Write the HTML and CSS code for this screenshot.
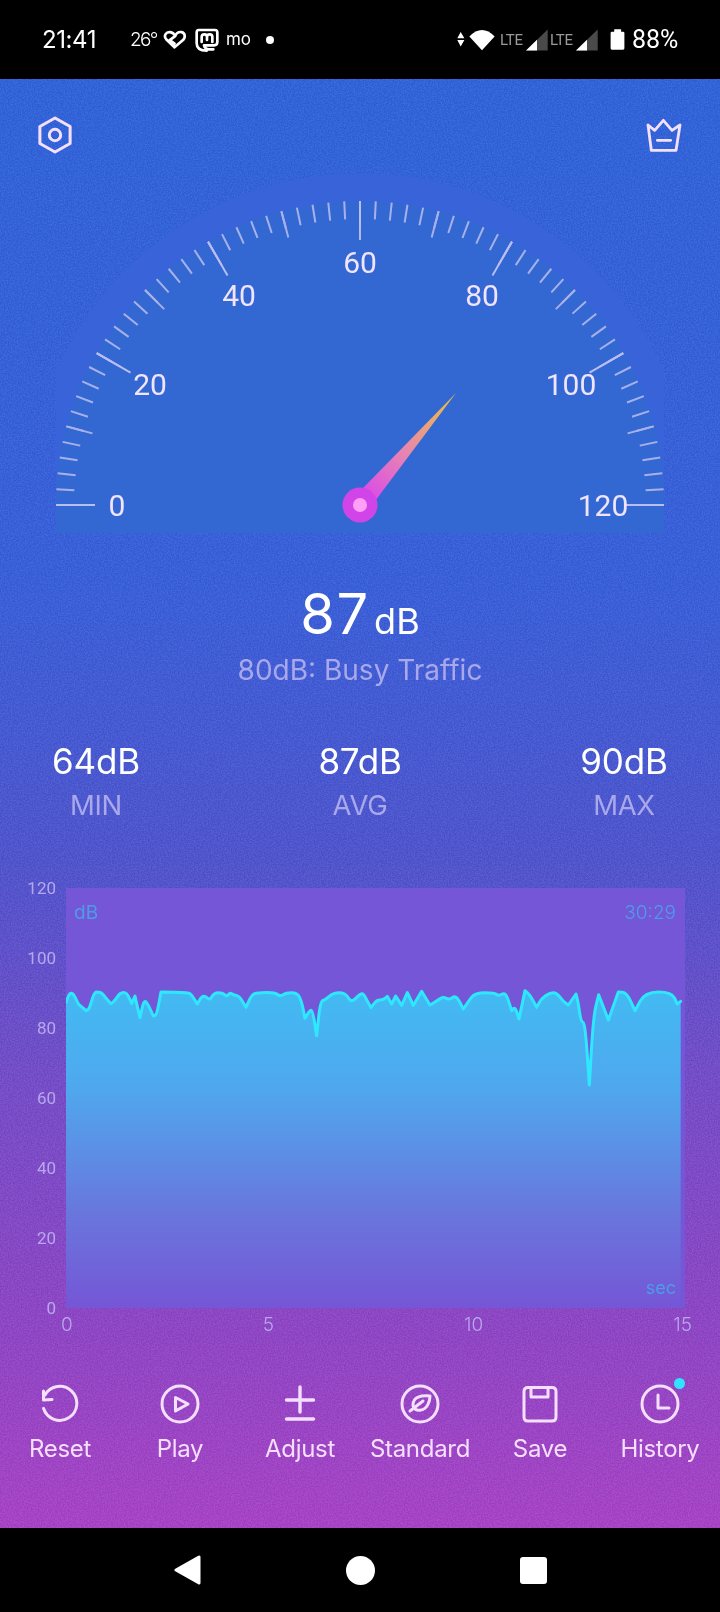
FILE: index.html
```html
<!DOCTYPE html>
<html lang="en">
<head>
<meta charset="utf-8">
<title>Sound Meter</title>
<link rel="stylesheet" href="styles.css">
</head>
<body>
<div class="phone">
  <header class="status">
    <span class="time">21:41</span>
    <span class="temp">26°</span>
    <svg class="si heart" viewBox="488 90 68 56"><path class="st" d="M522 141 L498 118 C488 106 498 95 509 96 C517 97 522 103 524 108 L508 120 L522 130 M524 108 C527 100 535 95 543 96 C553 98 555 111 548 119 L522 141"/></svg>
    <svg class="si masto" viewBox="585 82 72 72"><path class="st" d="M596 88 H645 Q652 88 652 96 V124 Q652 134 642 134 H612 Q614 148 640 146 M596 88 Q590 88 590 96 V128 Q590 150 620 150 M605 124 V109 Q605 101 613 101 Q621 101 621 109 V118 M621 109 Q621 101 629 101 Q637 101 637 109 V124"/></svg>
    <span class="mo">mo</span>
    <span class="dot"></span>
    <span class="spring"></span>
    <svg class="si arrows" viewBox="294 86 26 52"><path class="wf" d="M306 88 L318 108 H295 Z M295 114 H318 L306 135 Z"/></svg>
    <svg class="si wifi" viewBox="330 82 78 68"><path class="wf" d="M330 105 Q369 65 408 105 L369 148 Z"/></svg>
    <span class="lte">LTE</span>
    <svg class="si signal" viewBox="500 86 66 65"><path class="sd" d="M500 150 L565 87 V150 Z"/><path class="wf" d="M500 150 L533 118 V150 Z"/></svg>
    <span class="lte lte2">LTE</span>
    <svg class="si signal sig2" viewBox="500 86 66 65"><path class="sd" d="M500 150 L565 87 V150 Z"/><path class="wf" d="M500 150 L533 118 V150 Z"/></svg>
    <svg class="si battery" viewBox="752 87 44 64"><path class="wf" d="M764 88 H785 V95 H791 Q795 95 795 99 V146 Q795 150 791 150 H757 Q753 150 753 146 V99 Q753 95 757 95 H764 Z"/></svg>
    <span class="pct">88%</span>
  </header>

  <main class="app">
    <svg class="noise" aria-hidden="true"><filter id="grain" color-interpolation-filters="sRGB" x="0" y="0" width="100%" height="100%"><feTurbulence type="fractalNoise" baseFrequency="0.7" numOctaves="2" seed="4"/><feColorMatrix type="matrix" values="2.6 0 0 0 -.8  2.6 0 0 0 -.8  2.6 0 0 0 -.8  0 0 0 0 1"/></filter><rect width="100%" height="100%" filter="url(#grain)"/></svg>

    <div class="top">
      <svg class="hex" viewBox="0 0 36 40"><path class="ic hexs" d="M18 2 L34 11 V29 L18 38 L2 29 V11 Z"/><circle class="ic hexs" cx="18" cy="20" r="6"/></svg>
      <svg class="crown" viewBox="860 355 110 105"><path class="ic3" d="M866 376 L886 392 L912 362 L938 392 L962 376 L950 452 H876 Z M894 422 H934"/></svg>
    </div>

    <svg class="gauge" viewBox="56 173 608 360">
      <defs>
        <clipPath id="upper"><rect x="56" y="100" width="608" height="406"/></clipPath>
        <clipPath id="box"><rect x="56" y="173" width="608" height="360"/></clipPath>
        <linearGradient id="needle" gradientUnits="userSpaceOnUse" x1="360" y1="505" x2="456" y2="393">
          <stop offset="0" stop-color="#d840f0"/>
          <stop offset=".45" stop-color="#e683b4"/>
          <stop offset=".85" stop-color="#ebb25c"/>
          <stop offset="1" stop-color="#e8b84a"/>
        </linearGradient>
      </defs>
      <g clip-path="url(#box)">
        <circle class="halo" cx="360" cy="505" r="332"/>
        <circle class="face" cx="360" cy="505" r="304"/>
        <rect class="face" x="56" y="505" width="608" height="28"/>
      </g>
      <g clip-path="url(#upper)">
        <circle class="tick minor" cx="360" cy="505" r="295" pathLength="360" transform="rotate(180 360 505)"/>
        <circle class="tick mid" cx="360" cy="505" r="290.5" pathLength="360" transform="rotate(180 360 505)"/>
        <circle class="tick major" cx="360" cy="505" r="284.5" pathLength="360" transform="rotate(180 360 505)"/>
      </g>
      <text class="gl" x="117" y="516">0</text>
      <text class="gl" x="150" y="395">20</text>
      <text class="gl" x="239" y="306">40</text>
      <text class="gl" x="360" y="273">60</text>
      <text class="gl" x="482" y="306">80</text>
      <text class="gl" x="571" y="395">100</text>
      <text class="gl" x="603" y="516">120</text>
      <path d="M367.4 511.3 L352.6 498.7 L456 393 Z" fill="url(#needle)"/>
      <circle class="hub" cx="360" cy="505" r="17.5"/>
      <circle class="hub-in" cx="360" cy="505" r="7"/>
    </svg>

    <section class="reading">
      <div class="level"><span class="num">87</span> <span class="unit">dB</span></div>
      <div class="desc">80dB: Busy Traffic</div>
    </section>

    <section class="stats">
      <div class="stat"><div class="sv">64dB</div><div class="sl">MIN</div></div>
      <div class="stat"><div class="sv">87dB</div><div class="sl">AVG</div></div>
      <div class="stat"><div class="sv">90dB</div><div class="sl">MAX</div></div>
    </section>

    <section class="chart">
      <div class="y-axis"><span>120</span><span>100</span><span>80</span><span>60</span><span>40</span><span>20</span><span>0</span></div>
      <div class="plot">
        <svg class="plot-svg" viewBox="198 84 1857 1260" preserveAspectRatio="none">
          <defs>
            <linearGradient id="area" gradientUnits="userSpaceOnUse" x1="0" y1="396" x2="0" y2="1344">
              <stop offset="0" stop-color="#42baf2"/>
              <stop offset=".3" stop-color="#4fa8ee"/>
              <stop offset=".72" stop-color="#6a74dc"/>
              <stop offset="1" stop-color="#7556d6"/>
            </linearGradient>
          </defs>
          <path class="area" d="M198 428 Q205 405 210 401 T220 403.5 T230 421.5 T240 436.5 T251.5 446 T258 452 T263 449.5 T274 426 T284 400.5 T288 396 T296.5 396.5 T311.5 406 T325.5 423 T333 431 T339 426.5 T352.5 410 T370 397.5 T387.5 413.5 T395 430 T400 419 T405 408 T408.5 424 T416 456.5 T420 473 T426 445.5 T438.5 426.5 T452.5 451.5 T460 468 T465 466.5 T476.5 430.5 T483 396 T524 396.5 T570 401 T583.5 418.5 T592 432 T598.5 421 T610 409 T622.5 414.5 T636 409.5 T655 398 T674 404 T685 404 T695 401.5 T709 406.5 T728 425 T738 442 T746.5 423.5 T762.5 401.5 T797.5 397.5 T832.5 403.5 T849 404 T875 398 T898.5 411.5 T910 450 T915 475 T922.5 462.5 T934 451 T944 489.5 T950 527 T954 488.5 T961.5 436 T970 421 T987.5 409 T1017.5 398 T1042.5 410 T1055 422 T1070 412 T1085 401 T1095 410 T1106.5 431.5 T1113 443 T1121.5 431.5 T1140 420 T1156 414.5 T1162 409 T1168.5 420.5 T1175 432 T1181 420 T1187 408 T1196 422 T1205 436 T1213.5 417 T1222 398 T1231 417 T1240 436 T1252.5 415 T1265 394 T1277.5 414.5 T1290 435 T1302.5 427.5 T1322.5 415 T1339 415 T1358 412.5 T1379 426 T1390 447 T1397.5 436 T1415 411.5 T1455 398 T1490 403 T1505 403 T1520 409 T1530 436 T1535 452 T1540 446 T1551 458.5 T1557 477 T1566 434.5 T1575 392 T1582.5 398.5 T1600 423.5 T1610 442 T1617.5 428.5 T1637.5 406.5 T1660 398 T1680 411.5 T1697.5 430 T1705 435 T1716.5 418.5 T1728 402 T1731.5 416 T1739 458.5 T1749 487 T1761.5 581 T1768 675 T1774 572.5 T1788 437 T1796 404 T1810.5 442 T1825 480 T1840 438 T1855 396 T1867.5 397 T1892.5 425 T1905 452 T1920 424 T1975 396 T2023.5 414 T2032 432 T2037 428 L2042 424 V1344 H198 Z"/>
          <path class="line" d="M198 428 Q205 405 210 401 T220 403.5 T230 421.5 T240 436.5 T251.5 446 T258 452 T263 449.5 T274 426 T284 400.5 T288 396 T296.5 396.5 T311.5 406 T325.5 423 T333 431 T339 426.5 T352.5 410 T370 397.5 T387.5 413.5 T395 430 T400 419 T405 408 T408.5 424 T416 456.5 T420 473 T426 445.5 T438.5 426.5 T452.5 451.5 T460 468 T465 466.5 T476.5 430.5 T483 396 T524 396.5 T570 401 T583.5 418.5 T592 432 T598.5 421 T610 409 T622.5 414.5 T636 409.5 T655 398 T674 404 T685 404 T695 401.5 T709 406.5 T728 425 T738 442 T746.5 423.5 T762.5 401.5 T797.5 397.5 T832.5 403.5 T849 404 T875 398 T898.5 411.5 T910 450 T915 475 T922.5 462.5 T934 451 T944 489.5 T950 527 T954 488.5 T961.5 436 T970 421 T987.5 409 T1017.5 398 T1042.5 410 T1055 422 T1070 412 T1085 401 T1095 410 T1106.5 431.5 T1113 443 T1121.5 431.5 T1140 420 T1156 414.5 T1162 409 T1168.5 420.5 T1175 432 T1181 420 T1187 408 T1196 422 T1205 436 T1213.5 417 T1222 398 T1231 417 T1240 436 T1252.5 415 T1265 394 T1277.5 414.5 T1290 435 T1302.5 427.5 T1322.5 415 T1339 415 T1358 412.5 T1379 426 T1390 447 T1397.5 436 T1415 411.5 T1455 398 T1490 403 T1505 403 T1520 409 T1530 436 T1535 452 T1540 446 T1551 458.5 T1557 477 T1566 434.5 T1575 392 T1582.5 398.5 T1600 423.5 T1610 442 T1617.5 428.5 T1637.5 406.5 T1660 398 T1680 411.5 T1697.5 430 T1705 435 T1716.5 418.5 T1728 402 T1731.5 416 T1739 458.5 T1749 487 T1761.5 581 T1768 675 T1774 572.5 T1788 437 T1796 404 T1810.5 442 T1825 480 T1840 438 T1855 396 T1867.5 397 T1892.5 425 T1905 452 T1920 424 T1975 396 T2023.5 414 T2032 432 T2037 428 L2042 424"/>
        </svg>
        <span class="pl pl-db">dB</span>
        <span class="pl pl-time">30:29</span>
        <span class="pl pl-sec">sec</span>
      </div>
      <div class="x-axis"><span>0</span><span>5</span><span>10</span><span>15</span></div>
    </section>

    <nav class="tools">
      <div class="tool">
        <svg class="ti" viewBox="0 0 40 40"><path class="ic" d="M5 11 A17 17 0 1 1 3.6 24.5 M3.5 7 L3.5 16 L12 15.5"/></svg>
        <span class="tl">Reset</span>
      </div>
      <div class="tool">
        <svg class="ti" viewBox="0 0 40 40"><circle class="ic" cx="20" cy="20" r="18"/><path class="ic" d="M15.5 13.5 L28 20 L15.5 27 Z"/></svg>
        <span class="tl">Play</span>
      </div>
      <div class="tool">
        <svg class="ti" viewBox="0 0 40 40"><path class="ic thick" d="M6.5 16 H33.5 M20 3 V28 M6.5 35 H33.5"/></svg>
        <span class="tl">Adjust</span>
      </div>
      <div class="tool">
        <svg class="ti" viewBox="0 0 40 40"><circle class="ic" cx="20" cy="20" r="18"/><path class="ic" d="M30 12 C21 11 13 13 13 21 C13 25 17 27 21 26 C27 25 30 18 30 12 Z M10 27 L23 17"/></svg>
        <span class="tl">Standard</span>
      </div>
      <div class="tool">
        <svg class="ti" viewBox="0 0 40 40"><path class="ic" d="M8 3.5 H32 Q36 3.5 36 7.5 V33 Q36 37 32 37 H8 Q4 37 4 33 V7.5 Q4 3.5 8 3.5 Z M11 3.5 V13 H28 V3.5"/></svg>
        <span class="tl">Save</span>
      </div>
      <div class="tool">
        <svg class="ti" viewBox="0 0 40 40"><circle class="ic" cx="20" cy="20" r="18"/><path class="ic" d="M18 11 V24 H29"/></svg>
        <span class="tl">History</span>
        <span class="badge"></span>
      </div>
    </nav>
  </main>

  <footer class="navbar">
    <svg class="nv" viewBox="0 0 27 30"><path class="wf round" d="M2 15 L25 2 V28 Z"/></svg>
    <span class="home"></span>
    <span class="recent"></span>
  </footer>
</div>
</body>
</html>
```

FILE: styles.css
```css
* { box-sizing: border-box; }
html, body { margin: 0; padding: 0; background: #000; }
body { font-family: "Inter", "Liberation Sans", sans-serif; color: #fff; }
.phone { width: 720px; height: 1612px; display: flex; flex-direction: column; overflow: hidden; }

/* status bar */
.status { height: 79px; flex: none; background: #000; display: flex; align-items: center; padding: 0 42px; }
.time { font-size: 24px; font-weight: 400; width: 54px; white-space: nowrap; letter-spacing: -.4px; }
.temp { font-size: 19px; margin-left: 34px; width: 30px; letter-spacing: -1.7px; font-weight: 300; }
.si { display: block; flex: none; }
.st { fill: none; stroke: #fff; stroke-width: 8; stroke-linejoin: round; stroke-linecap: round; }
.wf { fill: #fff; }
.sd { fill: #4a4a4a; }
.round { stroke: #fff; stroke-width: 3; stroke-linejoin: round; }
.heart { width: 23px; height: 19px; margin-left: 3px; }
.masto { width: 24px; height: 24px; margin-left: 9px; }
.mo { font-size: 17px; width: 26px; margin-left: 7px; letter-spacing: -.2px; line-height: 1; }
.dot { width: 8px; height: 8px; border-radius: 50%; background: #fff; margin-left: 14px; }
.spring { flex: 1; }
.arrows { width: 8px; height: 17px; }
.wifi { width: 26px; height: 22px; margin-left: 4px; }
.lte { font-family: "Roboto", sans-serif; font-size: 15px; color: #9a9a9a; margin-left: 5px; width: 22px; letter-spacing: -.3px; }
.lte2 { margin-left: 2px; }
.signal { width: 22px; height: 22px; margin-left: 4px; }
.sig2 { margin-left: 4px; }
.battery { width: 15px; height: 21px; margin-left: 12px; }
.pct { font-family: "Roboto", sans-serif; font-size: 25px; margin-left: 7px; width: 46px; white-space: nowrap; }

/* main */
.app { flex: 1; position: relative; display: flex; flex-direction: column; background: linear-gradient(180deg, #3164d8 0%, #3a60d8 35%, #5155cc 54%, #774dc7 70%, #9046c4 87%, #a744c5 100%); }
.noise { position: absolute; left: 0; top: 0; width: 100%; height: 100%; opacity: .14; mix-blend-mode: soft-light; }
.top, .gauge, .reading, .stats, .chart, .tools { position: relative; }
.top { height: 94px; padding: 37px 37px 0 38px; display: flex; justify-content: space-between; align-items: flex-start; }
.hex { width: 34px; height: 38px; }
.crown { width: 36.7px; height: 35px; margin-top: 2px; }
.ic { fill: none; stroke: #f5dfff; stroke-width: 3; stroke-linejoin: round; stroke-linecap: round; }
.ic3 { fill: none; stroke: #f5dfff; stroke-width: 8.5; stroke-linejoin: round; stroke-linecap: round; }
.hexs { stroke-width: 3.2; }
.thick { stroke-width: 3.4; }

/* gauge */
.gauge { display: block; width: 608px; height: 360px; margin: 0 auto; flex: none; }
.halo { fill: #3863d9; }
.face { fill: #3368d3; }
.tick { fill: none; }
.minor { stroke: #a8b0ea; stroke-width: 18; stroke-dasharray: .39 2.61; stroke-dashoffset: .195; }
.mid { stroke: #a8b0ea; stroke-width: 27; stroke-dasharray: .39 14.61; stroke-dashoffset: .195; }
.major { stroke: #b9bdf0; stroke-width: 39; stroke-dasharray: .4 29.6; stroke-dashoffset: .2; }
.gl { font-family: "Roboto", sans-serif; font-size: 30px; fill: #f1e4ff; text-anchor: middle; }
.hub { fill: #d044e8; }
.hub-in { fill: #ff9ff5; }

/* reading */
.reading { margin-top: 51px; text-align: center; }
.level { height: 60px; line-height: 60px; white-space: nowrap; }
.num { font-size: 56px; letter-spacing: 1.5px; }
.unit { font-size: 36px; }
.desc { margin-top: 8px; height: 36px; line-height: 36px; font-size: 28px; color: #a8a8ea; }

/* stats */
.stats { margin-top: 53px; padding: 0 36px; display: flex; justify-content: space-between; }
.stat { width: 120px; text-align: center; }
.sv { height: 40px; line-height: 40px; font-size: 35px; white-space: nowrap; letter-spacing: -.2px; }
.sl { margin-top: 7px; height: 34px; line-height: 34px; font-size: 27.5px; color: #a8a8ea; letter-spacing: -.3px; }

/* chart */
.chart { margin-top: 66px; display: grid; grid-template-columns: 56px 619px; column-gap: 10px; }
.y-axis { margin: -11px 0; height: 442px; display: flex; flex-direction: column; justify-content: space-between; align-items: flex-end; font-family: "Roboto", sans-serif; font-size: 17px; line-height: 22px; color: #b7a8ec; }
.plot { position: relative; height: 420px; background: #7556d6; }
.plot-svg { display: block; width: 100%; height: 100%; }
.area { fill: url(#area); }
.line { fill: none; stroke: #2ee8ff; stroke-width: 9; stroke-linejoin: round; stroke-linecap: round; }
.pl { position: absolute; font-size: 19px; line-height: 22px; color: #4c9de8; }
.pl-db { left: 8px; top: 14px; }
.pl-time { right: 9px; top: 14px; font-weight: 300; }
.pl-sec { right: 9px; bottom: 9px; font-size: 18px; }
.x-axis { grid-column: 2; margin: 6px -7px 0 -5px; display: flex; justify-content: space-between; font-size: 19px; line-height: 22px; color: #b7a8ec; font-weight: 300; }

/* tools */
.tools { margin-top: 48px; display: grid; grid-template-columns: repeat(6, 120px); }
.tool { position: relative; display: flex; flex-direction: column; align-items: center; }
.ti { width: 40px; height: 40px; display: block; }
.tl { margin-top: 10px; height: 30px; line-height: 30px; font-size: 24px; color: #f5dfff; letter-spacing: -.3px; white-space: nowrap; }
.badge { position: absolute; left: 74px; top: -6px; width: 11px; height: 11px; border-radius: 50%; background: #2fe4ff; }

/* nav bar */
.navbar { height: 84px; flex: none; background: #000; display: flex; align-items: center; justify-content: center; gap: 145px; }
.nv { width: 27px; height: 30px; display: block; }
.home { width: 29px; height: 29px; border-radius: 50%; background: #fff; }
.recent { width: 27px; height: 27px; border-radius: 3px; background: #fff; }
```
